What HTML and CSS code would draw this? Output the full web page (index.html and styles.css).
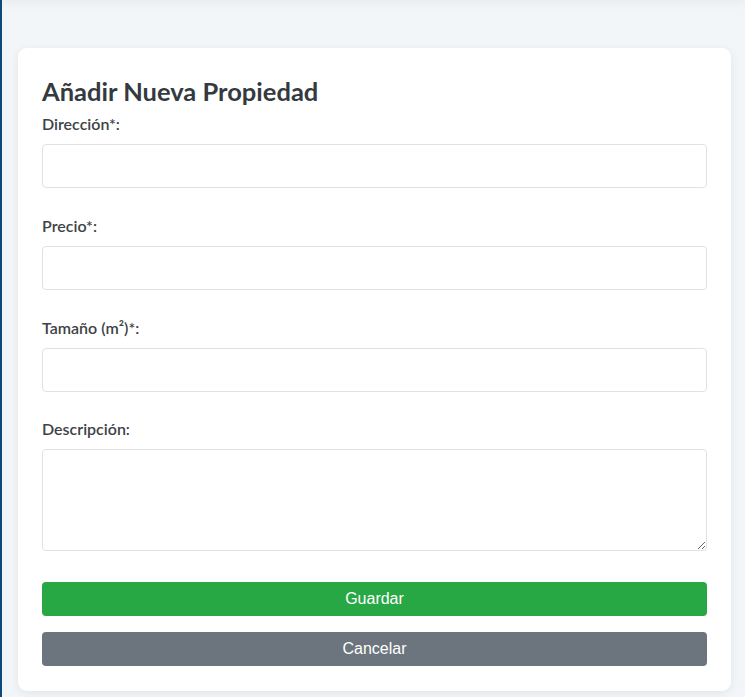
FILE: index.html
```html
<!DOCTYPE html>
<html lang="es">
<head>
<meta charset="utf-8">
<title>Añadir Nueva Propiedad</title>
<link rel="stylesheet" href="styles.css">
</head>
<body>
<div class="main">
  <div class="topbar"></div>
  <div class="card">
    <h2 class="title">Añadir Nueva Propiedad</h2>
    <form class="form">
      <div class="group">
        <label class="label">Dirección*:</label>
        <input class="input" type="text">
      </div>
      <div class="group">
        <label class="label">Precio*:</label>
        <input class="input" type="text">
      </div>
      <div class="group group-last-input">
        <label class="label">Tamaño (m²)*:</label>
        <input class="input" type="text">
      </div>
      <div class="group group-textarea">
        <label class="label">Descripción:</label>
        <textarea class="textarea"></textarea>
      </div>
      <button type="button" class="btn btn-save">Guardar</button>
      <button type="button" class="btn btn-cancel">Cancelar</button>
    </form>
  </div>
</div>
</body>
</html>
```
FILE: styles.css
```css
html, body {
  margin: 0;
  padding: 0;
  height: 100%;
}
body {
  background: #f3f6f9;
  font-family: Lato, "Open Sans", sans-serif;
  color: #343a40;
  overflow: hidden;
}
.main {
  min-height: 100%;
  border-left: 2px solid #0d4a7e;
  box-sizing: border-box;
  display: flex;
  flex-direction: column;
}
.topbar {
  height: 0;
  box-shadow: 0 0 10px 2px rgba(0, 0, 0, 0.09);
}
.card {
  margin: 48px 14px 0 16px;
  background: #fff;
  border-radius: 9px;
  box-shadow: 0 2px 10px rgba(0, 0, 0, 0.07);
  padding: 28px 24px 25px 24px;
}
.title {
  margin: 0;
  font-size: 25.5px;
  line-height: 30px;
  font-weight: 700;
  color: #343a40;
}
.form {
  display: flex;
  flex-direction: column;
}
.group {
  display: flex;
  flex-direction: column;
  margin-bottom: 28px;
}
.group:first-child {
  margin-top: 8px;
}
.group-last-input {
  margin-bottom: 27px;
}
.group-textarea {
  margin-bottom: 31px;
}
.label {
  font-size: 16px;
  line-height: 20px;
  font-weight: 600;
  color: #3d4348;
  margin-bottom: 10px;
}
.input, .textarea {
  box-sizing: border-box;
  width: 100%;
  height: 44px;
  border: 1px solid #dee2e6;
  border-radius: 4px;
  background: #fff;
  margin: 0;
  padding: 8px 12px;
  font: 16px Lato, sans-serif;
}
.textarea {
  height: 102px;
  resize: vertical;
  display: block;
}
.btn {
  height: 34px;
  border: none;
  border-radius: 4px;
  color: #fff;
  font-family: "Liberation Sans", Arial, sans-serif;
  font-size: 16px;
  padding: 0;
  width: 100%;
}
.btn-save {
  background: #28a745;
  margin-bottom: 16px;
}
.btn-cancel {
  background: #6c757d;
}
```
